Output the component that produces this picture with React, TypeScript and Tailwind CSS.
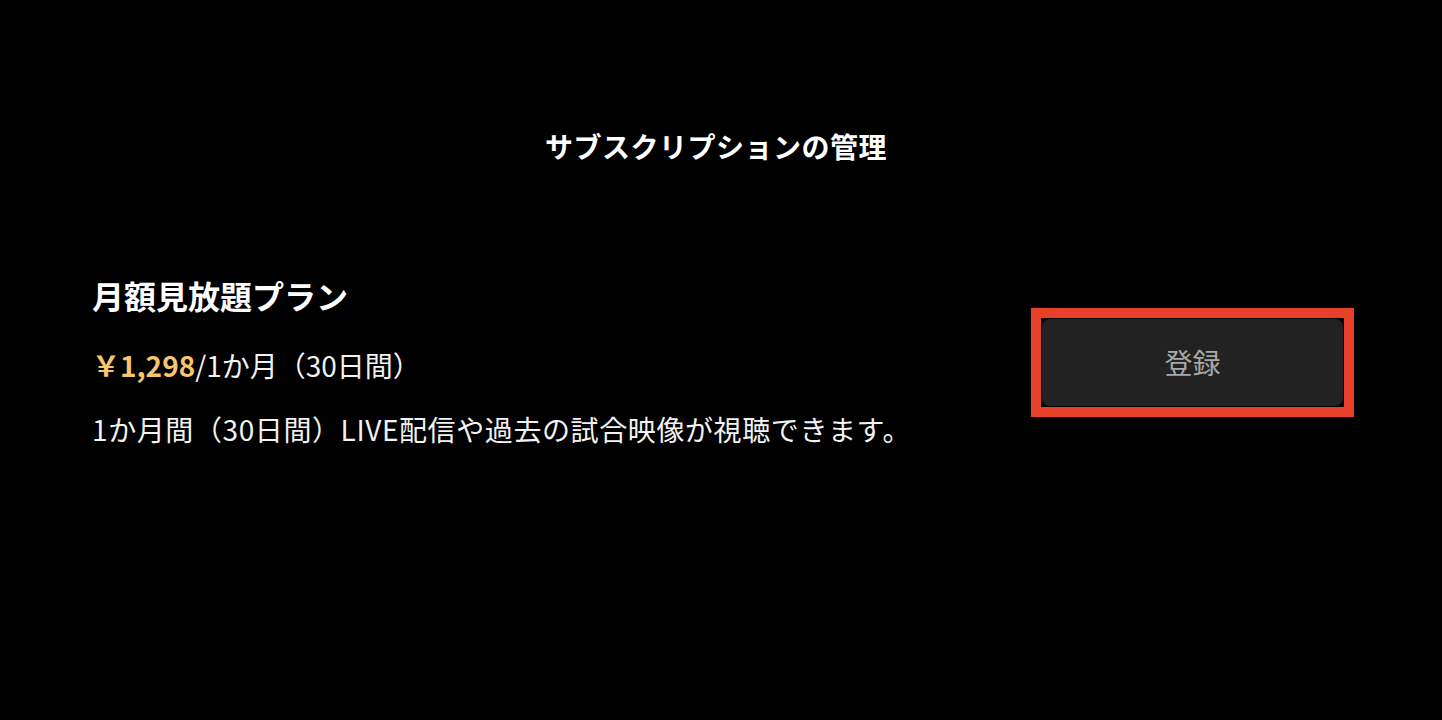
import React from 'react';

const FONT = "font-['Noto_Sans_CJK_JP','Noto_Sans',sans-serif]";

const App: React.FC = () => {
  return (
    <div className={`min-h-[720px] w-full bg-black text-white ${FONT}`}>
      {/* Header */}
      <div className="flex justify-center pt-[126px] pr-[10px]">
        <h1 className="text-[28px] font-bold leading-[40px] tracking-[0.5px]">サブスクリプションの管理</h1>
      </div>

      {/* Plan row */}
      <div className="mt-[107px] flex items-center justify-between pl-[92px] pr-[88px]">
        <div className="flex flex-col">
          <p className="text-[32px] font-bold leading-[44px]">月額見放題プラン</p>
          <p className="mt-[28px] text-[28px] leading-[40px] text-[#f2f2f2]">
            <span className="font-bold text-[#f6c66c]">￥1,298</span>/1か月（30日間）
          </p>
          <p className="mt-[24px] text-[28px] leading-[40px] tracking-[0.6px] text-[#f2f2f2]">
            1か月間（30日間）LIVE配信や過去の試合映像が視聴できます。
          </p>
        </div>

        <div className="mt-[2px] border-[10px] border-[#e8412a] p-[1px]">
          <button className="flex h-[87px] w-[301px] items-center justify-center rounded-lg bg-[#222222] text-[28px] text-[#a8a8a8]">
            登録
          </button>
        </div>
      </div>
    </div>
  );
};

export default App;
